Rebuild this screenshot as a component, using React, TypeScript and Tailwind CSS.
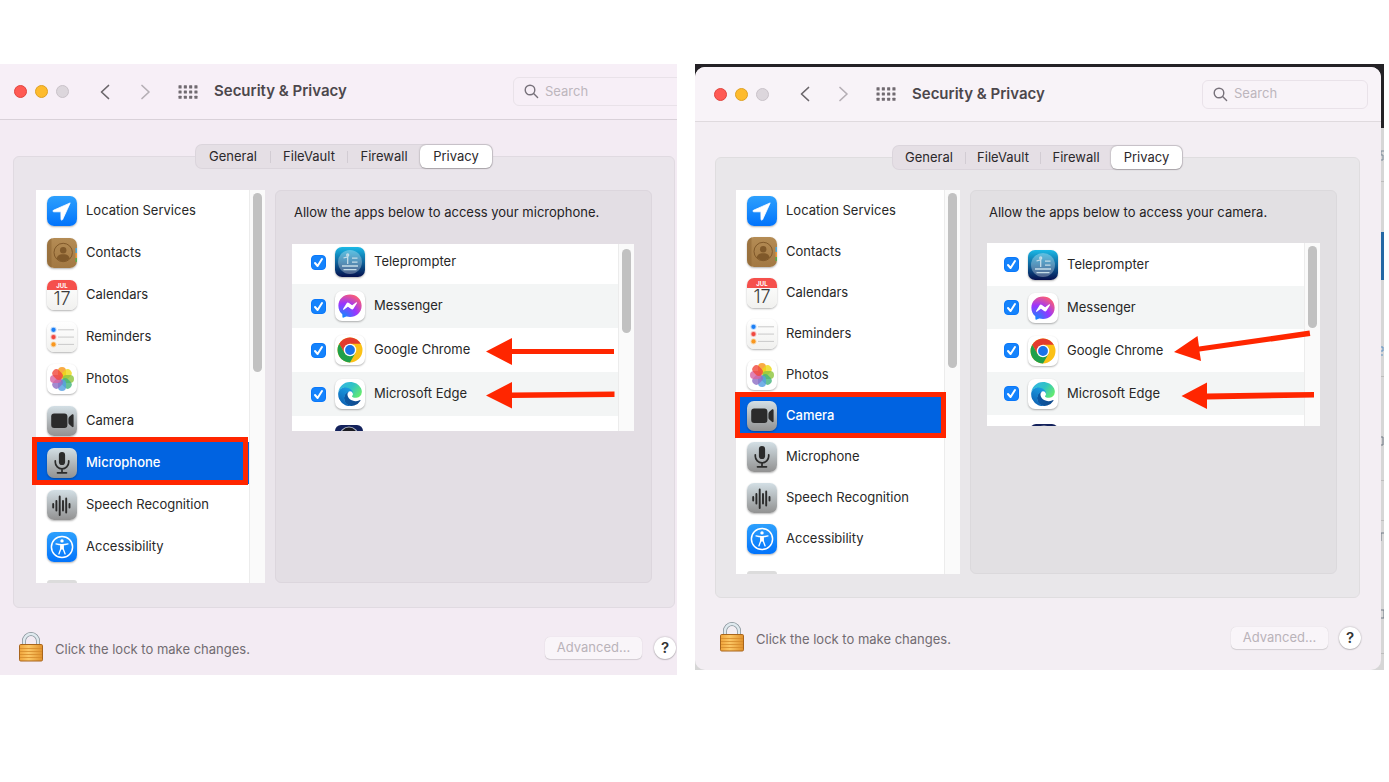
import React from "react";
import { FaFacebookMessenger } from "react-icons/fa";

type Variant = "microphone" | "camera";

const tileShadow = "shadow-[0_1px_2px_rgba(0,0,0,0.3)]";

function Tile({ className, children }: { className: string; children?: React.ReactNode }) {
  return (
    <span className={`block size-[30px] shrink-0 overflow-hidden rounded-[7px] ${tileShadow} ${className}`}>
      <svg viewBox="0 0 30 30" className="block size-full" aria-hidden="true">
        {children}
      </svg>
    </span>
  );
}

const blueTile = "bg-linear-to-b from-[#2da0fd] to-[#0273fb]";
const greyTile = "bg-linear-to-b from-[#d3dfe5] to-[#929292]";
const paperTile = "bg-linear-to-b from-white to-[#f1f1ef]";

function LocationIcon() {
  return (
    <Tile className={blueTile}>
      <path d="M23.2 6.9 6.4 14.3c-.8.4-.5 1.5.3 1.5h6.6c.4 0 .6.2.6.6l.1 6.9c0 .9 1.200 1.200 1.600.3Z" fill="#fff" stroke="#fff" strokeWidth=".8" strokeLinejoin="round" />
    </Tile>
  );
}

function ContactsIcon() {
  return (
    <Tile className="bg-linear-to-b from-[#b48c55] to-[#a27842]">
      <rect width="4.500" height="30" fill="#8f6836" opacity=".6" />
      <rect x="28.500" y="10" width="1.500" height="5" fill="#4ea5d8" />
      <rect x="28.500" y="15" width="1.500" height="5" fill="#e9973a" />
      <rect x="28.500" y="20" width="1.500" height="4" fill="#55ad4c" />
      <circle cx="16.200" cy="14.500" r="9.200" fill="none" stroke="#80592a" strokeWidth="1" />
      <circle cx="16.200" cy="12.300" r="3.200" fill="#80592a" />
      <path d="M9.700 20.600c1-3.700 3.500-4.300 6.500-4.300s5.500.6 6.500 4.300a9 9 0 0 1-13 0Z" fill="#80592a" />
    </Tile>
  );
}

function CalendarIcon() {
  return (
    <span className={`flex size-[30px] shrink-0 flex-col overflow-hidden rounded-[7px] text-center ${tileShadow} ${paperTile}`}>
      <span className="block h-[10px] bg-[#f5504c] text-[6px] leading-[11px] font-bold text-white">JUL</span>
      <span className="block text-[18px] leading-[18px] font-light text-[#3c3c3c]">17</span>
    </span>
  );
}

function RemindersIcon() {
  return (
    <Tile className={paperTile}>
      {["#1b7ff5", "#f0473f", "#f9971e"].map((c, i) => (
        <g key={c}>
          <circle cx="6.500" cy={7.800 + i * 7.300} r="3" fill={c} opacity=".3" />
          <circle cx="6.500" cy={7.800 + i * 7.300} r="2.100" fill={c} />
          <path d={`M11 ${7.8 + i * 7.3}H27`} stroke="#c4c4c4" strokeWidth=".9" />
        </g>
      ))}
    </Tile>
  );
}

function PhotosIcon() {
  const petals = ["#f8981b", "#ecd91a", "#8fc63f", "#45b57c", "#559fe2", "#8f70c6", "#d866a4", "#f24a3e"];
  return (
    <Tile className="bg-white">
      {petals.map((c, i) => (
        <rect key={c} x="11" y="3" width="8" height="11.500" rx="4" fill={c} opacity=".82" transform={`rotate(${i * 45} 15 15)`} />
      ))}
    </Tile>
  );
}

function CameraIcon() {
  return (
    <Tile className={greyTile}>
      <rect x="4.200" y="7.500" width="16.200" height="14.500" rx="3" fill="#2b2b2b" />
      <path d="M22.300 10.800 24.900 8.600c.8-.7 1.700-.4 1.700.6v11c0 1-.9 1.300-1.700.6l-2.600-2.200c-.6-.5-.9-1.300-.9-2.200v-3.400c0-.9.3-1.700.9-2.200Z" fill="#2b2b2b" />
    </Tile>
  );
}

function MicrophoneIcon() {
  return (
    <Tile className={greyTile}>
      <rect x="11.900" y="4" width="6.200" height="13" rx="3.100" fill="#2b2b2b" />
      <path d="M8.300 12.800v1.400a6.700 6.700 0 0 0 13.400 0v-1.400M15 21v3.800M10.500 24.800h9" fill="none" stroke="#2b2b2b" strokeWidth="1.700" strokeLinecap="round" />
    </Tile>
  );
}

function SpeechIcon() {
  return (
    <Tile className={greyTile}>
      <path d="M6.200 14v3.500M9.400 11v9.500M12.700 6.500v18.500M16 11v9.500M19.200 8.500v14M22.500 14v3.500" stroke="#2b2b2b" strokeWidth="1.900" strokeLinecap="round" />
    </Tile>
  );
}

function AccessibilityIcon() {
  return (
    <Tile className={blueTile}>
      <circle cx="15" cy="15" r="10.600" fill="none" stroke="#fff" strokeWidth="1.500" />
      <circle cx="15" cy="8.900" r="1.700" fill="#fff" />
      <path d="M9 11.900c3.500 1 8.500 1 12 0M13.900 12.600v4l-2 5.300M16.100 12.600v4l2 5.300" fill="none" stroke="#fff" strokeWidth="1.300" strokeLinecap="round" />
      <path d="M13.300 12h3.400v5.500h-3.400Z" fill="#fff" />
    </Tile>
  );
}

function TeleprompterIcon() {
  return (
    <Tile className="bg-linear-to-b from-[#1cb9e6] via-[#0f659d] to-[#07104f]">
      <circle cx="15" cy="15" r="12" fill="#fff" opacity=".3" />
      <g stroke="#c6dde8" strokeWidth="1.300" fill="none">
        <circle cx="12.700" cy="8" r="1" />
        <path d="M8.500 11l4.200-1.200V17M17 11.200h5.500M17 15.200h5.500M7 19h16M8.500 22.600h13" />
      </g>
    </Tile>
  );
}

function MessengerIcon() {
  return (
    <Tile className="bg-white">
      <defs>
        <radialGradient id="messenger" cx=".2" cy="1" r="1.100">
          <stop offset="0" stopColor="#0a8dff" />
          <stop offset=".55" stopColor="#9a35ff" />
          <stop offset="1" stopColor="#ff5f70" />
        </radialGradient>
      </defs>
      <FaFacebookMessenger x="3" y="3" size={24} fill="url(#messenger)" />
    </Tile>
  );
}

function ChromeIcon() {
  return (
    <Tile className="bg-white">
      <circle cx="15" cy="15" r="12.500" fill="#fbc116" />
      <path d="M4.200 8.750A12.500 12.500 0 0 1 25.800 8.750H15L9.600 18.100Z" fill="#e33b2e" />
      <path d="M4.200 8.750A12.500 12.500 0 0 0 15 27.500L20.400 18.100 9.600 18.100Z" fill="#1fa04b" />
      <circle cx="15" cy="15" r="6.250" fill="#fff" />
      <circle cx="15" cy="15" r="4.900" fill="#1a73e8" />
    </Tile>
  );
}

function EdgeIcon() {
  return (
    <Tile className="bg-white">
      <defs>
        <linearGradient id="edgeDeep" x1="0" y1="0" x2="1" y2="0">
          <stop offset="0" stopColor="#0c59a4" />
          <stop offset="1" stopColor="#114a8b" />
        </linearGradient>
        <linearGradient id="edgeMid" x1="0.600" y1="0" x2="0.200" y2="1">
          <stop offset="0" stopColor="#1b9de2" />
          <stop offset="1" stopColor="#0c5eb0" />
        </linearGradient>
        <linearGradient id="edgeTop" x1="0" y1=".2" x2="1" y2=".7">
          <stop offset="0" stopColor="#35b4e4" />
          <stop offset=".5" stopColor="#2fc3c5" />
          <stop offset="1" stopColor="#66eb6e" />
        </linearGradient>
      </defs>
      <svg x="3" y="3" width="24" height="24" viewBox="0 0 256 259">
        <path fill="url(#edgeDeep)" d="M235.680 195.460a93.730 93.730 0 0 1-10.540 4.710 101.870 101.870 0 0 1-35.900 6.460c-47.320 0-88.540-32.550-88.540-74.320A31.480 31.480 0 0 1 117.130 105c-42.800 1.800-53.800 46.400-53.800 72.530 0 73.880 68.090 81.370 82.760 81.370 7.910 0 19.840-2.300 27-4.560l1.310-.44a128.340 128.340 0 0 0 66.600-52.800 4 4 0 0 0-5.320-5.640Z" />
        <path fill="url(#edgeMid)" d="M105.730 246.420A79.200 79.200 0 0 1 83 225.080a80.720 80.720 0 0 1 29.500-120.800c3.120-1.470 8.450-4.130 15.540-4a32.350 32.350 0 0 1 25.690 13 31.880 31.880 0 0 1 6.360 18.660c0-.21 24.460-79.600-80-79.600-43.900 0-80 41.660-80 78.210a130.150 130.150 0 0 0 12.110 56 128 128 0 0 0 156.380 67.110 75.550 75.550 0 0 1-62.780-8Z" />
        <path fill="url(#edgeTop)" d="M152.330 148.860c-.81 1.050-3.300 2.500-3.300 5.660 0 2.610 1.700 5.120 4.720 7.230 14.380 10 41.490 8.680 41.560 8.680a59.560 59.560 0 0 0 30.270-8.350 61.380 61.380 0 0 0 30.430-52.880c.26-22.410-8-37.310-11.340-43.910C223.460 23.840 177.720 0 128 0A128 128 0 0 0 0 126.200c.48-36.540 36.800-66.050 80-66.050 3.500 0 23.460.34 42 10.070 16.340 8.580 24.900 18.940 30.850 29.210 6.180 10.670 7.280 24.150 7.280 29.520s-2.740 13.330-7.800 19.910Z" />
      </svg>
    </Tile>
  );
}

function LockIcon() {
  return (
    <svg viewBox="0 0 26 31" className="h-[31px] w-[26px] shrink-0" aria-hidden="true">
      <defs>
        <linearGradient id="brass" x1="0" y1="0" x2="1" y2="0">
          <stop offset="0" stopColor="#f0a43a" />
          <stop offset=".4" stopColor="#fcc765" />
          <stop offset="1" stopColor="#e0912c" />
        </linearGradient>
      </defs>
      <path d="M6 14V9a7 7 0 0 1 14 0v5" fill="none" stroke="#7f8c93" strokeWidth="4" />
      <path d="M6 14V9a7 7 0 0 1 14 0v5" fill="none" stroke="#dfe9ee" strokeWidth="2.600" />
      <rect x="1.500" y="12.500" width="23" height="16.500" rx="1.200" fill="url(#brass)" stroke="#a9651b" />
      <path d="M2 16.500h22M2 19.500h22M2 22.500h22M2 25.500h22" stroke="#d58a2b" strokeWidth=".8" />
    </svg>
  );
}

const services = [
  { name: "Location Services", Icon: LocationIcon },
  { name: "Contacts", Icon: ContactsIcon },
  { name: "Calendars", Icon: CalendarIcon },
  { name: "Reminders", Icon: RemindersIcon },
  { name: "Photos", Icon: PhotosIcon },
  { name: "Camera", Icon: CameraIcon },
  { name: "Microphone", Icon: MicrophoneIcon },
  { name: "Speech Recognition", Icon: SpeechIcon },
  { name: "Accessibility", Icon: AccessibilityIcon },
];

const apps = [
  { name: "Teleprompter", Icon: TeleprompterIcon },
  { name: "Messenger", Icon: MessengerIcon },
  { name: "Google Chrome", Icon: ChromeIcon },
  { name: "Microsoft Edge", Icon: EdgeIcon },
];

const themes = {
  microphone: {
    window: "bg-[#f3ebf3]",
    toolbar: "h-14 pl-[14px] bg-[#f7eff7] border-[#d9d1d9]",
    forward: "ml-[26px]",
    search: "-mr-[6px] w-[170px]",
    tabBar: "mt-[25px] pl-[13px] pr-[2px]",
    tabs: "grid-cols-[75px_77px_72px_72px]",
    panel: "ml-[13px] mr-[2px] pt-[33px] pl-[22px] pr-[22px] pb-6 bg-[#eae5eb] border-[#e0dae1]",
    list: "h-[393px] w-[229px]",
    row: "h-[42px]",
    thumb: "h-[179px]",
    pane: "ml-[10px] pl-4 pr-[17px] bg-[#e3dee4] border-[#dcd6dd]",
    apps: "mt-[22px] h-[187px]",
    app: "h-11",
    appRows: "-mt-1",
    appPad: "pl-[19px]",
    appThumb: "mt-[5px] h-[84px]",
    footer: "pt-6 pl-[18px] pr-[1px] pb-3",
    help: "ml-3",
    annotation: "-left-[4px] right-[1px] -top-[5px] h-12",
  },
  camera: {
    window: "bg-[#f3eef3] rounded-[10px]",
    toolbar: "h-[55px] pl-[19px] bg-[#f8f3f8] border-[#dfdade]",
    forward: "ml-6",
    search: "mr-[13px] w-[166px]",
    tabBar: "mt-6 pl-5 pr-[21px]",
    tabs: "grid-cols-[73px_75px_70px_71px]",
    panel: "ml-5 mr-[21px] pt-8 pl-5 pr-[22px] pb-[23px] bg-[#e9e7ea] border-[#dfdddf]",
    list: "h-[384px] w-[224px]",
    row: "h-[41px]",
    thumb: "h-[175px]",
    pane: "ml-[10px] px-4 bg-[#e2e0e3] border-[#dbd9dc]",
    apps: "mt-[21px] h-[183px]",
    app: "h-[43px]",
    appRows: "",
    appPad: "pl-[17px]",
    appThumb: "mt-[3px] h-[82px]",
    footer: "pt-6 pl-6 pr-5 pb-[17px]",
    help: "ml-[11px]",
    annotation: "-left-[1px] -right-[2px] -top-[3px] h-[46px]",
  },
};

function Toolbar({ variant }: { variant: Variant }) {
  const t = themes[variant];
  const dots = [0, 1, 2, 3].flatMap((x) => [0, 1, 2].map((y) => [x, y]));
  return (
    <header className={`flex shrink-0 items-center border-b ${t.toolbar}`}>
      <div className="flex gap-2">
        <button aria-label="Close" className="size-[13px] rounded-full border border-[#e0443e] bg-[#ff5a54]" />
        <button aria-label="Minimize" className="size-[13px] rounded-full border border-[#dea123] bg-[#febb2d]" />
        <button aria-label="Zoom" className="size-[13px] rounded-full border border-[#c9c2c9] bg-[#dcd6dc]" />
      </div>
      <button aria-label="Back" className="ml-[29px]">
        <svg viewBox="0 0 14 16" className="h-4 w-[14px]" fill="none" stroke="#6b666b" strokeWidth="1.700" strokeLinecap="round" strokeLinejoin="round">
          <path d="M10.500 1.500 3.500 8l7 6.500" />
        </svg>
      </button>
      <button aria-label="Forward" className={t.forward}>
        <svg viewBox="0 0 14 16" className="h-4 w-[14px]" fill="none" stroke="#b5afb5" strokeWidth="1.700" strokeLinecap="round" strokeLinejoin="round">
          <path d="m4 1.500 7 6.500-7 6.500" />
        </svg>
      </button>
      <button aria-label="Show all" className="ml-[26px]">
        <svg viewBox="0 0 20 14" className="h-[14px] w-5" fill="#706a70">
          {dots.map(([x, y]) => (
            <rect key={`${x}-${y}`} x={0.5 + x * 5.3} y={0.3 + y * 5.2} width="3.100" height="3.100" rx=".5" />
          ))}
        </svg>
      </button>
      <h1 className="ml-4 flex-1 text-[15px] font-semibold whitespace-nowrap text-[#4c474c]">Security &amp; Privacy</h1>
      <label className={`flex h-[29px] shrink-0 items-center gap-[6px] rounded-md border border-[#e9e2e9] pl-[10px] ${t.search}`}>
        <svg viewBox="0 0 15 15" className="size-[15px] shrink-0" fill="none" stroke="#77717a" strokeWidth="1.400" strokeLinecap="round" aria-hidden="true">
          <circle cx="6" cy="6" r="4.800" />
          <path d="m9.600 9.600 4 4" />
        </svg>
        <input type="text" aria-label="Search" placeholder="Search" className="w-full min-w-0 bg-transparent text-[13px] outline-none placeholder:text-[#bdb6bd]" />
      </label>
    </header>
  );
}

function Tabs({ variant }: { variant: Variant }) {
  const t = themes[variant];
  return (
    <div className={`relative z-10 flex justify-center ${t.tabBar}`}>
      <nav className={`grid h-[23px] rounded-md bg-[#e5dfe5] text-[13px] text-[#2b282b] ring-1 ring-[#dbd5dc] ${t.tabs}`}>
        {["General", "FileVault", "Firewall", "Privacy"].map((tab, i) => (
          <button
            key={tab}
            className={
              tab === "Privacy"
                ? "rounded-md bg-white shadow-[0_0_2px_rgba(0,0,0,0.35),0_1px_1px_rgba(0,0,0,0.15)]"
                : "flex items-center"
            }
          >
            <span className="flex-1">{tab}</span>
            {i < 2 && <span className="h-3 w-px bg-[#d2ccd3]" />}
          </button>
        ))}
      </nav>
    </div>
  );
}

function Window({ variant }: { variant: Variant }) {
  const t = themes[variant];
  const selected = variant === "microphone" ? "Microphone" : "Camera";
  return (
    <section className={`relative overflow-hidden ${t.window}`}>
      <Toolbar variant={variant} />
      <Tabs variant={variant} />
      <div className={`-mt-3 flex rounded-md border ${t.panel}`}>
        <div className={`flex shrink-0 bg-[#fafafa] ${t.list}`}>
          <div className="h-full flex-1 border-r border-[#ececec] bg-white">
            <ul>
              {services.map(({ name, Icon }) => {
                const on = name === selected;
                return (
                  <li key={name} className={`relative ${t.row} ${on ? "bg-[#0063e1]" : ""}`}>
                    <button className="flex h-full w-full items-center gap-[9px] pl-[11px] text-left text-[13px]">
                      <Icon />
                      <span className={`whitespace-nowrap ${on ? "font-medium text-white" : "text-[#272727]"}`}>{name}</span>
                    </button>
                    {on && <span className={`pointer-events-none absolute border-[5px] border-[#ff2600] ${t.annotation}`} />}
                  </li>
                );
              })}
            </ul>
            <div className="mt-3 ml-[11px] h-[3px] w-[30px] rounded-t-[3px] bg-[#dcdcdc]" />
          </div>
          <div className="flex w-[15px] justify-center pt-[3px]">
            <div className={`w-[9px] rounded-full bg-[#c1c1c1] ${t.thumb}`} />
          </div>
        </div>

        <div className={`min-w-0 flex-1 rounded-md border ${t.pane}`}>
          <p className="mt-[11px] pl-[2px] text-[13px] leading-5 whitespace-nowrap text-[#242224]">
            Allow the apps below to access your {selected.toLowerCase()}.
          </p>
          <div className={`flex overflow-hidden bg-[#fafafa] ${t.apps}`}>
            <ul className={`flex-1 ${t.appRows}`}>
              {apps.map(({ name, Icon }, i) => (
                <li key={name} className={i % 2 ? "bg-[#f3f5f5]" : "bg-white"}>
                  <label className={`flex items-center ${t.app} ${t.appPad}`}>
                    <span className="relative flex size-[15px] shrink-0">
                      <input type="checkbox" defaultChecked className="peer size-[15px] appearance-none rounded-[4px] border border-[#bbb] bg-white checked:border-[#0a78fa] checked:bg-[#1583fc]" />
                      <svg viewBox="0 0 15 15" className="pointer-events-none absolute inset-0 hidden peer-checked:block" fill="none" stroke="#fff" strokeWidth="2" strokeLinecap="round" strokeLinejoin="round">
                        <path d="m4 8 2.600 3L11 4" />
                      </svg>
                    </span>
                    <span className="ml-[9px]"><Icon /></span>
                    <span className="ml-[9px] text-[13px] whitespace-nowrap text-[#272727]">{name}</span>
                  </label>
                </li>
              ))}
              <li className="h-5 bg-white pl-[43px]">
                <svg viewBox="0 0 28 20" className="block h-5 w-[28px]" aria-hidden="true">
                  <path d="M0 20V15a6 6 0 0 1 6-6h16a6 6 0 0 1 6 6v5Z" fill="#14225c" />
                  <circle cx="14" cy="20" r="9" fill="#1b1b22" stroke="#a9b0bd" strokeWidth="1.200" />
                </svg>
              </li>
            </ul>
            <div className="flex w-4 justify-center border-l border-[#ececec]">
              <div className={`w-[9px] rounded-full bg-[#c1c1c1] ${t.appThumb}`} />
            </div>
          </div>
        </div>
      </div>

      <footer className={`flex items-center ${t.footer}`}>
        <LockIcon />
        <p className="ml-[11px] flex-1 pt-1 text-[13px] whitespace-nowrap text-[#716b71]">Click the lock to make changes.</p>
        <button disabled className="h-[22px] w-[97px] rounded-[5px] bg-[#f9f5f9] text-[13px] text-[#b9b3b9] shadow-[0_0_1px_rgba(0,0,0,0.15),0_1px_1px_rgba(0,0,0,0.12)]">
          Advanced...
        </button>
        <button aria-label="Help" className={`size-[22px] shrink-0 rounded-full bg-white text-[15px] leading-[22px] font-semibold text-[#333] shadow-[0_0_2px_rgba(0,0,0,0.3),0_1px_1px_rgba(0,0,0,0.15)] ${t.help}`}>
          ?
        </button>
      </footer>
    </section>
  );
}

/* The arrows float over the app list, pointing at the two browsers. */
function Arrows({ variant }: { variant: Variant }) {
  return variant === "microphone" ? (
    <svg viewBox="0 0 130 75" className="pointer-events-none absolute top-[271px] left-[486px] h-[75px] w-[130px]" fill="#ff2600" aria-hidden="true">
      <path d="M0 16.500 26 3v11h102v5H26v11Z" />
      <path d="M0 60.500 26 47v10.500l102.500-1v5.500L26 63v10.500Z" />
    </svg>
  ) : (
    <svg viewBox="0 0 144 84" className="pointer-events-none absolute top-[264px] left-[479px] h-[84px] w-[144px]" fill="#ff2600" aria-hidden="true">
      <path d="M0 24 23.500 8l1.500 10.500L135.500 2.500l.8 5.500L25.500 23.500 27 33Z" />
      <path d="M7.500 68 33 54.500v11l107-1.500v5.500L33 71.500V81Z" />
    </svg>
  );
}

/* Sliver of the document that is open behind the camera window. */
function Backdrop() {
  return (
    <div className="absolute inset-0 flex flex-col overflow-hidden bg-[#d6d6d6]" aria-hidden="true">
      <div className="h-16 shrink-0 bg-[#242226]" />
      <svg viewBox="0 0 4 542" className="ml-auto h-[542px] w-1 shrink-0" fill="none">
        <path d="M0 53.500h4M0 248.500h4M0 352.500h4M0 392.500h4M0 525.500h4" stroke="#bcbcbc" />
        <rect y="104" width="4" height="48" fill="#2568a4" />
        <path d="M4 23H1v4h2v5H0" stroke="#7a8a99" />
        <path d="M0 219h3v4H0M0 227h3" stroke="#5d91c4" />
        <path d="M0 309h3v8H0M1 413v-8h3M1 482h3v8H1" stroke="#707b86" />
      </svg>
    </div>
  );
}

export default function App() {
  return (
    <main className="grid grid-cols-[677fr_689fr] items-start gap-[18px] bg-white pt-16 pr-[5px] font-['Inter','Liberation_Sans',sans-serif]">
      <div className="relative min-w-0">
        <Window variant="microphone" />
        <Arrows variant="microphone" />
      </div>
      <div className="relative min-w-0 pt-[3px] pr-[3px]">
        <Backdrop />
        <Window variant="camera" />
        <Arrows variant="camera" />
      </div>
    </main>
  );
}
